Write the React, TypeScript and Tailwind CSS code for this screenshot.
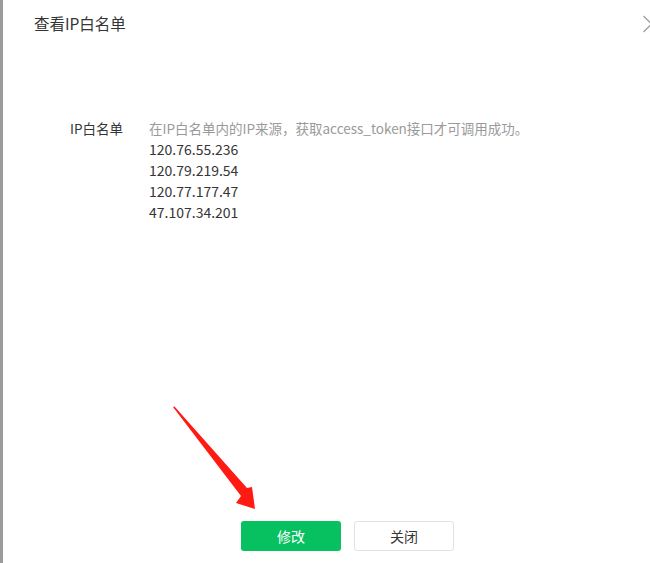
import React from "react";

export default function App() {
  const font = { fontFamily: '"Noto Sans CJK SC", "Noto Sans", sans-serif' };
  return (
    <div className="relative w-[650px] h-[563px] overflow-hidden bg-white flex" style={font}>
      <div className="w-[3px] h-full bg-[#9b9b9b] shrink-0" />
      <div className="relative flex-1 flex flex-col h-full">
        <div className="h-[48px] flex items-center pl-[31px] text-[15.5px] text-[#353535]">查看IP白名单</div>
        <svg className="absolute left-[640px] top-[15px]" width="14" height="18" viewBox="0 0 14 18">
          <path d="M0.5 1 L8.5 9 L0.5 17" fill="none" stroke="#a0a0a0" strokeWidth="1.3" />
        </svg>
        <div className="flex pt-[70px] pl-[67px] text-[14px] leading-[21px]">
          <div className="w-[79px] text-[#353535] text-[13.5px]">IP白名单</div>
          <div className="flex flex-col">
            <div className="text-[#9a9a9a] text-[13.5px]">在IP白名单内的IP来源，获取access_token接口才可调用成功。</div>
            <div className="text-[#353535]">120.76.55.236</div>
            <div className="text-[#353535]">120.79.219.54</div>
            <div className="text-[#353535]">120.77.177.47</div>
            <div className="text-[#353535]">47.107.34.201</div>
          </div>
        </div>
        <div className="flex-1" />
        <div className="flex gap-[13px] pl-[238px] pb-[12px]">
          <button className="w-[100px] h-[30px] rounded-[3px] bg-[#07c160] text-white text-[14px]">修改</button>
          <button className="w-[100px] h-[30px] rounded-[3px] border border-[#e2e2e2] bg-white text-[#353535] text-[14px]">关闭</button>
        </div>
      </div>
      <svg className="absolute left-0 top-0 pointer-events-none" width="650" height="563" viewBox="0 0 650 563">
        <polygon points="173,407 174.5,406.5 247,488 252,487 255,509 236,503 241,496" fill="#ff1a12" />
      </svg>
    </div>
  );
}
